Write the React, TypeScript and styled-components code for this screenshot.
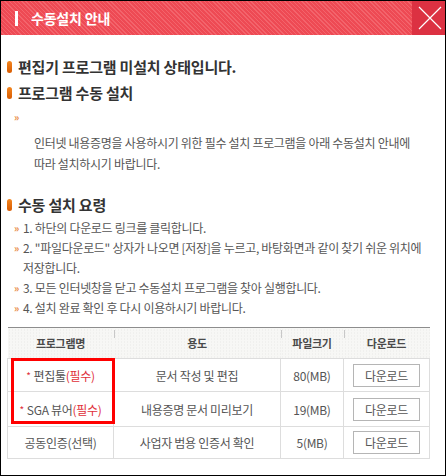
import React from "react";
import styled, { createGlobalStyle } from "styled-components";

const Global = createGlobalStyle`
  html, body { margin: 0; padding: 0; background: #fff; }
  body { font-family: "Noto Sans CJK KR", "Noto Sans", sans-serif; }
  * { box-sizing: border-box; }
`;

const Frame = styled.div`
  width: 446px;
  height: 476px;
  border: 1px solid #000;
  display: flex;
  flex-direction: column;
  overflow: hidden;
  background: #fff;
`;

const TitleBar = styled.div`
  height: 34px;
  flex: none;
  display: flex;
  align-items: center;
  background: repeating-linear-gradient(45deg, #ee4a54 0 2px, #f3646c 2px 3px);
`;

const TitleMark = styled.span`
  width: 3px;
  height: 15px;
  background: #fff;
  margin-left: 14px;
  margin-right: 13px;
`;

const TitleText = styled.h1`
  margin: 0;
  flex: 1;
  color: #fff;
  font-size: 14px;
  font-weight: 700;
  letter-spacing: -0.2px;
  line-height: 20px;
`;

const CloseButton = styled.button`
  width: 33px;
  height: 34px;
  border: 0;
  padding: 0 0 0 6px;
  background: #dc3142;
  display: flex;
  align-items: center;
  cursor: pointer;
`;

const Content = styled.div`
  padding: 22px 16px 0 6px;
  display: flex;
  flex-direction: column;
`;

const Heading = styled.h2<{ $gap?: number }>`
  margin: ${(p) => p.$gap ?? 0}px 0 0 0;
  display: flex;
  align-items: center;
  gap: 6px;
  height: 20px;
  font-size: 15px;
  font-weight: 700;
  color: #333;
  letter-spacing: -0.2px;
  line-height: 20px;
`;

const Pill = styled.span`
  width: 5px;
  height: 12px;
  border-radius: 3px;
  background: linear-gradient(#f3861f, #d85a00);
  flex: none;
`;

const List = styled.ul<{ $gap?: number }>`
  list-style: none;
  margin: ${(p) => p.$gap ?? 0}px 0 0 0;
  padding: 0;
`;

const Item = styled.li<{ $lh?: number }>`
  display: flex;
  font-size: 12px;
  color: #555;
  letter-spacing: -0.3px;
  line-height: ${(p) => p.$lh ?? 20}px;
`;

const Arrow = styled.span`
  width: 9px;
  margin-left: 7px;
  flex: none;
  color: #e8893a;
  font-size: 10px;
  font-weight: 700;
  letter-spacing: 0;
`;

const Paragraph = styled.p`
  margin: 7px 0 0 0;
  padding-left: 27px;
  padding-right: 12px;
  font-size: 12px;
  color: #555;
  letter-spacing: -0.3px;
  line-height: 21px;
`;

const TableWrap = styled.div`
  position: relative;
  margin-top: 9px;
  width: 422px;
`;

const Table = styled.table`
  width: 422px;
  border-collapse: collapse;
  table-layout: fixed;
  border-top: 1px solid #8d8d8d;
`;

const Th = styled.th`
  position: relative;
  height: 31px;
  padding: 0;
  font-size: 11px;
  font-weight: 700;
  color: #4a4a4a;
  letter-spacing: -0.3px;
  border-bottom: 1px solid #ddd;
  background-color: #f7f7f5;
  background-image: radial-gradient(#e9e9e6 0.6px, transparent 0.7px);
  background-size: 3px 3px;
  &:not(:first-child)::before {
    content: "";
    position: absolute;
    left: 0;
    top: 2px;
    width: 1px;
    height: 8px;
    background: #c8c8c8;
  }
`;

const Td = styled.td<{ $h?: number }>`
  height: ${(p) => p.$h ?? 34}px;
  padding: 0;
  text-align: center;
  font-size: 12px;
  color: #555;
  letter-spacing: -0.3px;
  border: 1px solid #ddd;
`;

const Star = styled.span`
  color: #e0303a;
  font-size: 10px;
  margin-right: 3px;
  vertical-align: 1px;
`;

const Required = styled.span`
  color: #e0303a;
`;

const DownloadButton = styled.button`
  width: 67px;
  height: 23px;
  border: 1px solid #b5b5b5;
  background: #fff;
  padding: 0;
  font-family: inherit;
  font-size: 12px;
  color: #555;
  letter-spacing: -0.3px;
  cursor: pointer;
`;

const Highlight = styled.div`
  position: absolute;
  left: 4px;
  top: 31px;
  width: 104px;
  height: 66px;
  border: 3px solid #ff0000;
  pointer-events: none;
`;

const rows = [
  { name: "편집툴", req: true, use: "문서 작성 및 편집", size: "80(MB)", h: 33 },
  { name: "SGA 뷰어", req: true, use: "내용증명 문서 미리보기", size: "19(MB)", h: 35 },
  { name: "공동인증(선택)", req: false, use: "사업자 범용 인증서 확인", size: "5(MB)", h: 32 },
];

export default function App() {
  return (
    <>
      <Global />
      <Frame>
        <TitleBar>
          <TitleMark />
          <TitleText>수동설치 안내</TitleText>
          <CloseButton aria-label="닫기">
            <svg width="24" height="24" viewBox="0 0 24 24">
              <path d="M1 1 L23 23 M23 1 L1 23" stroke="#fff" strokeWidth="1.2" fill="none" />
            </svg>
          </CloseButton>
        </TitleBar>
        <Content>
          <Heading>
            <Pill />
            편집기 프로그램 미설치 상태입니다.
          </Heading>
          <Heading $gap={6}>
            <Pill />
            프로그램 수동 설치
          </Heading>
          <List $gap={6}>
            <Item $lh={16}>
              <Arrow>»</Arrow>
            </Item>
          </List>
          <Paragraph>
            인터넷 내용증명을 사용하시기 위한 필수 설치 프로그램을 아래 수동설치 안내에 따라 설치하시기 바랍니다.
          </Paragraph>
          <Heading $gap={21}>
            <Pill />
            수동 설치 요령
          </Heading>
          <List $gap={3}>
            <Item>
              <Arrow>»</Arrow>
              <span>1. 하단의 다운로드 링크를 클릭합니다.</span>
            </Item>
            <Item>
              <Arrow>»</Arrow>
              <span>
                2. "파일다운로드" 상자가 나오면 [저장]을 누르고, 바탕화면과 같이 찾기 쉬운 위치에 저장합니다.
              </span>
            </Item>
            <Item>
              <Arrow>»</Arrow>
              <span>3. 모든 인터넷창을 닫고 수동설치 프로그램을 찾아 실행합니다.</span>
            </Item>
            <Item>
              <Arrow>»</Arrow>
              <span>4. 설치 완료 확인 후 다시 이용하시기 바랍니다.</span>
            </Item>
          </List>
          <TableWrap>
            <Table>
              <colgroup>
                <col style={{ width: 106 }} />
                <col style={{ width: 167 }} />
                <col style={{ width: 63 }} />
                <col style={{ width: 86 }} />
              </colgroup>
              <thead>
                <tr>
                  <Th>프로그램명</Th>
                  <Th>용도</Th>
                  <Th>파일크기</Th>
                  <Th>다운로드</Th>
                </tr>
              </thead>
              <tbody>
                {rows.map((r) => (
                  <tr key={r.name}>
                    <Td $h={r.h}>
                      {r.req ? (
                        <>
                          <Star>*</Star>
                          {r.name}
                          <Required>(필수)</Required>
                        </>
                      ) : (
                        r.name
                      )}
                    </Td>
                    <Td $h={r.h}>{r.use}</Td>
                    <Td $h={r.h}>{r.size}</Td>
                    <Td $h={r.h}>
                      <DownloadButton>다운로드</DownloadButton>
                    </Td>
                  </tr>
                ))}
              </tbody>
            </Table>
            <Highlight />
          </TableWrap>
        </Content>
      </Frame>
    </>
  );
}
